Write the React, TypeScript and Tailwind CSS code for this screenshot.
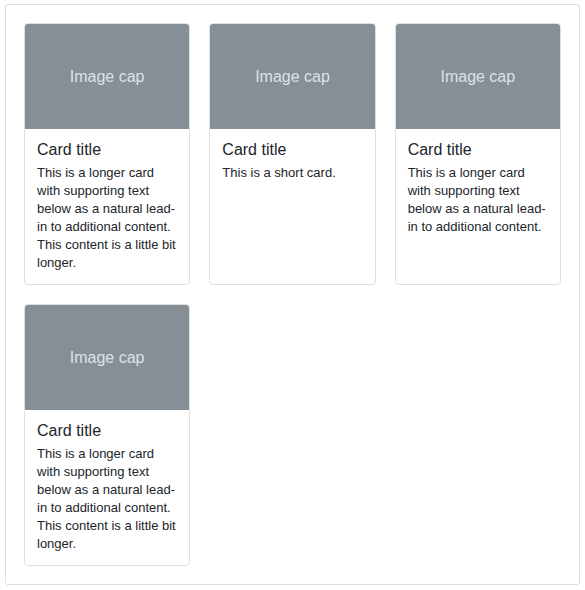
import { FC } from "react";

// ── Data ──────────────────────────────────────────────────────────────────────

const LONG = "This is a longer card with supporting text below as a natural lead-in to additional content. This content is a little bit longer.";
const MEDIUM = "This is a longer card with supporting text below as a natural lead-in to additional content.";
const SHORT = "This is a short card.";

const CARDS = [
  { id: 1, title: "Card title", text: LONG },
  { id: 2, title: "Card title", text: SHORT },
  { id: 3, title: "Card title", text: MEDIUM },
  { id: 4, title: "Card title", text: LONG },
];

// ── Card ──────────────────────────────────────────────────────────────────────

const Card: FC<{ title: string; text: string }> = ({ title, text }) => (
  <div className="flex flex-col bg-white border border-[#dfdfdf] rounded-[4px] overflow-hidden">
    <div className="h-[105px] bg-[#868e96] flex items-center justify-center">
      <span className="text-[16px] text-[#dee2e6]">Image cap</span>
    </div>
    <div className="px-3 pt-[11px] pb-3">
      <h5 className="text-[16px] leading-[20px] text-[#212529] mb-[4px]">{title}</h5>
      <p className="text-[13px] leading-[18px] text-[#212529]">{text}</p>
    </div>
  </div>
);

// ── App ───────────────────────────────────────────────────────────────────────

export default function App() {
  return (
    <div className="bg-white pt-[4px] px-[5px] pb-[5px] font-['Liberation_Sans',Arial,sans-serif]">
      <div className="border border-[#dddddd] rounded-[3px] p-[18px] grid grid-cols-3 gap-[19px] items-stretch">
        {CARDS.map((c) => (
          <Card key={c.id} title={c.title} text={c.text} />
        ))}
      </div>
    </div>
  );
}
